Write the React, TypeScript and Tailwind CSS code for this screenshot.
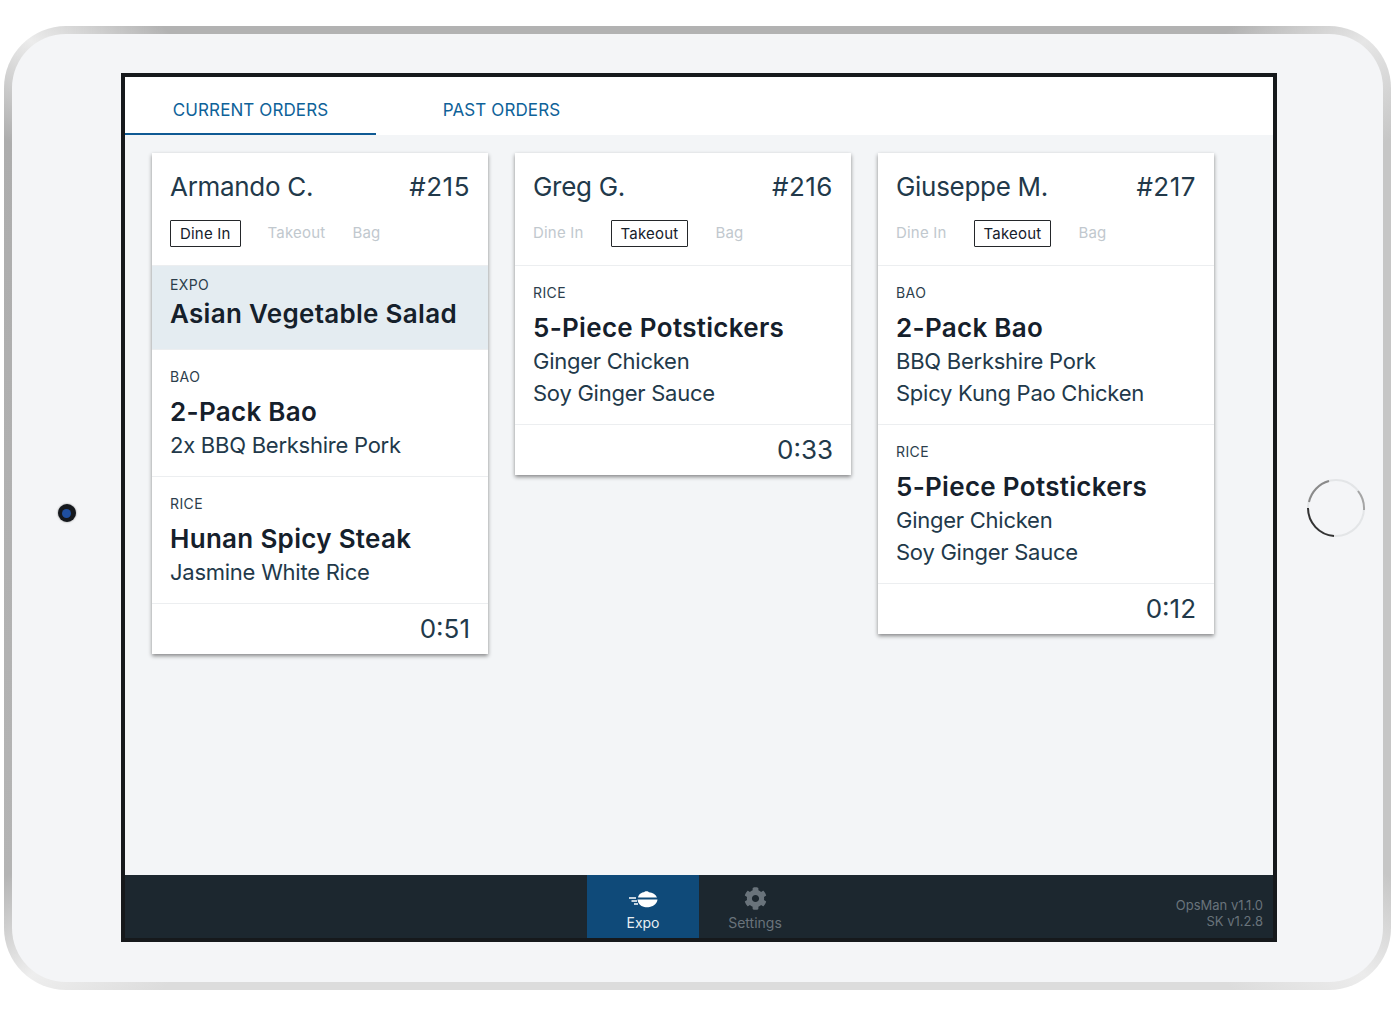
import { FaCog } from "react-icons/fa"

const font = "font-['Inter','Roboto',sans-serif]"

type Item = { category: string; name: string; details: string[]; highlight?: boolean }
type Order = { customer: string; number: string; type: string; items: Item[]; time: string }

const orders: Order[] = [
  {
    customer: "Armando C.",
    number: "#215",
    type: "Dine In",
    time: "0:51",
    items: [
      { category: "EXPO", name: "Asian Vegetable Salad", details: [], highlight: true },
      { category: "BAO", name: "2-Pack Bao", details: ["2x BBQ Berkshire Pork"] },
      { category: "RICE", name: "Hunan Spicy Steak", details: ["Jasmine White Rice"] },
    ],
  },
  {
    customer: "Greg G.",
    number: "#216",
    type: "Takeout",
    time: "0:33",
    items: [
      { category: "RICE", name: "5-Piece Potstickers", details: ["Ginger Chicken", "Soy Ginger Sauce"] },
    ],
  },
  {
    customer: "Giuseppe M.",
    number: "#217",
    type: "Takeout",
    time: "0:12",
    items: [
      { category: "BAO", name: "2-Pack Bao", details: ["BBQ Berkshire Pork", "Spicy Kung Pao Chicken"] },
      { category: "RICE", name: "5-Piece Potstickers", details: ["Ginger Chicken", "Soy Ginger Sauce"] },
    ],
  },
]

function OrderCard({ order }: { order: Order }) {
  return (
    <div className="w-[336px] bg-white shadow-[0_2px_4px_rgba(0,0,0,0.45)]">
      {/* Header */}
      <div className="px-[18px] pt-[18px] pb-[18px] border-b border-[#eceef0]">
        <div className="flex items-center justify-between h-[32px] text-[26px] text-[#22394a]">
          <span className="tracking-[-0.3px]">{order.customer}</span>
          <span className="tracking-[0.5px]">{order.number}</span>
        </div>
        <div className="flex items-center gap-[27px] h-[27px] mt-[17px] text-[15px] tracking-[0.2px]">
          {["Dine In", "Takeout", "Bag"].map((t) =>
            t === order.type ? (
              <span key={t} className="px-[9px] h-[27px] leading-[25px] border border-[#24272a] rounded-[1px] text-[#15202b]">{t}</span>
            ) : (
              <span key={t} className="text-[#c1c8ce]">{t}</span>
            )
          )}
        </div>
      </div>

      {order.items.map((item) => (
        <div
          key={item.name}
          className={item.highlight
            ? "px-[18px] pt-[9px] pb-[17px] bg-[#e4ecf1] border-b border-[#eceef0]"
            : "px-[18px] pt-[17px] pb-[15px] border-b border-[#eceef0]"}
        >
          <div className="h-[20px] leading-[20px] text-[14px] tracking-[0.4px] text-[#2c3e4c]">{item.category}</div>
          <div className={`${item.highlight ? "mt-[1px] h-[36px]" : "mt-[7px] h-[35px]"} leading-[36px] text-[26px] font-semibold tracking-[0.3px] text-[#15202b]`}>{item.name}</div>
          {item.details.map((d) => (
            <div key={d} className="h-[32px] leading-[32px] text-[22px] tracking-[-0.25px] text-[#22394a]">{d}</div>
          ))}
        </div>
      ))}

      <div className="h-[50px] flex items-center justify-end pr-[18px] text-[26px] text-[#22394a]">{order.time}</div>
    </div>
  )
}

function ExpoIcon() {
  return (
    <svg className="ml-[2px]" width="32" height="20" viewBox="0 0 32 20" fill="none">
      <path d="M10 8.500C11 4.500 14 3.500 16 3.300C16.500 1.800 20.500 1.800 21 3.300C24.500 3.600 27.500 5 29 8.500Z" fill="#fff" />
      <path d="M9.500 10.500H29.500C29 14.500 26 17 23 17.500C22.500 18.600 15.500 18.600 15 17.500C12.500 17 10 14.500 9.500 10.500Z" fill="#fff" />
      <path d="M1 9H8M3.500 12H9M6 15H10" stroke="#fff" strokeWidth="1.300" />
    </svg>
  )
}

function HomeButton() {
  return (
    <svg width="60" height="60" viewBox="0 0 60 60" fill="none">
      <circle cx="30" cy="30" r="28" stroke="#e3e5e7" strokeWidth="2" />
      <path d="M23 3A28 28 0 0 0 3 24" stroke="#8a8a8a" strokeWidth="2" />
      <path d="M2 30A28 28 0 0 0 28 58" stroke="#333333" strokeWidth="2" />
      <path d="M52 13A28 28 0 0 1 58 32" stroke="#a5a5a5" strokeWidth="2" />
    </svg>
  )
}

export default function App() {
  return (
    <div className={`${font} min-h-[1015px] bg-white pt-[26px] pl-[4px]`}>
      {/* Device frame */}
      <div className="w-[1387px] h-[964px] rounded-[62px] p-[8px] bg-[conic-gradient(#b2b2b2_0deg,#b2b2b2_48deg,#e6e6e6_55deg,#c6c6c6_62deg,#c6c6c6_118deg,#ececec_125deg,#dcdcdc_132deg,#dcdcdc_228deg,#eeeeee_235deg,#b4b4b4_242deg,#adadad_298deg,#ececec_305deg,#b2b2b2_312deg,#b2b2b2_360deg)]">
        <div className="h-full rounded-[54px] bg-[#f4f5f7] flex items-center">
          <div className="w-[109px] shrink-0 flex justify-center">
            <div className="w-[18px] h-[18px] mt-[10px] rounded-full bg-[#15181d] flex items-center justify-center shadow-[0_0_2px_rgba(0,0,0,0.5)]">
              <div className="w-[9px] h-[9px] rounded-full bg-[#1f4fa0]" />
            </div>
          </div>

          {/* Screen */}
          <div className="w-[1156px] h-[869px] -mt-[2px] border-[4px] border-[#16191c] bg-white flex flex-col">
            <div className="h-[58px] flex bg-white text-[17px] tracking-[0.1px] text-[#0e6299]">
              <div className="w-[251px] pt-[12px] flex items-center justify-center border-b-2 border-[#0f5a94]">CURRENT ORDERS</div>
              <div className="w-[251px] pt-[12px] flex items-center justify-center border-b-2 border-transparent">PAST ORDERS</div>
            </div>

            <div className="flex-1 bg-[#f3f5f7] flex items-start gap-[27px] pl-[27px] pt-[18px]">
              {orders.map((o) => (
                <OrderCard key={o.number} order={o} />
              ))}
            </div>

            <div className="h-[63px] bg-[#1c272f] flex">
              <div className="w-[462px]" />
              <div className="w-[112px] bg-[#0f4a79] flex flex-col items-center justify-end pb-[5px] text-[14px] text-[#e8eef2]">
                <ExpoIcon />
                <span className="mt-[4px] leading-[20px]">Expo</span>
              </div>
              <div className="w-[112px] flex flex-col items-center justify-end pb-[5px] text-[14px] text-[#69737b]">
                <FaCog size={23} />
                <span className="mt-[3px] leading-[20px]">Settings</span>
              </div>
              <div className="flex-1 flex flex-col items-end justify-center pr-[10px] pt-[14px] text-[13px] leading-[16px] text-[#69737b]">
                <span>OpsMan v1.1.0</span>
                <span>SK v1.2.8</span>
              </div>
            </div>
          </div>

          <div className="w-[106px] shrink-0 flex justify-center pl-[11px]">
            <HomeButton />
          </div>
        </div>
      </div>
    </div>
  )
}
